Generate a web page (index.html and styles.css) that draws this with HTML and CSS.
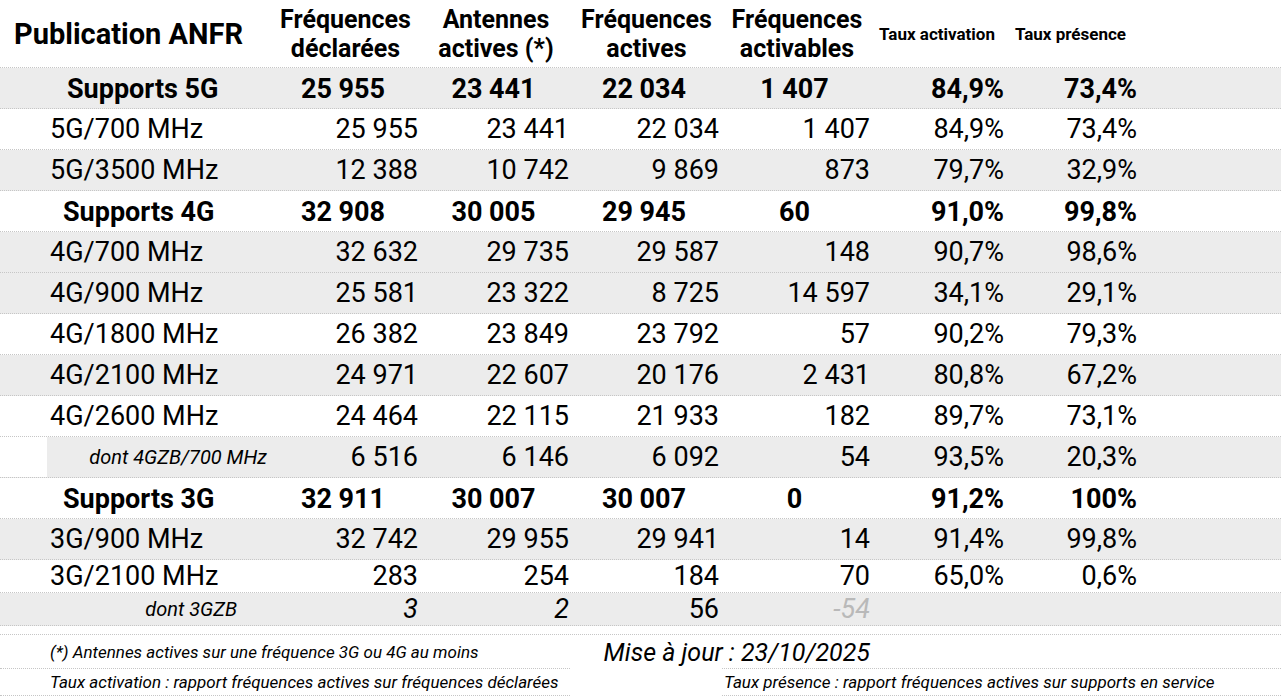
FILE: index.html
```html
<!DOCTYPE html>
<html lang="fr">
<head>
<meta charset="utf-8">
<title>Publication ANFR</title>
<link rel="stylesheet" href="styles.css">
</head>
<body>
<div class="sheet">
  <div class="row head">
    <div class="c title">Publication ANFR</div>
    <div class="c h">Fréquences<br>déclarées</div>
    <div class="c h">Antennes<br>actives (*)</div>
    <div class="c h">Fréquences<br>actives</div>
    <div class="c h">Fréquences<br>activables</div>
    <div class="c hs">Taux activation</div>
    <div class="c hs">Taux présence</div>
  </div>

  <div class="row sum gray">
    <div class="c slabel s5">Supports 5G</div>
    <div class="c sn">25 955</div><div class="c sn">23 441</div><div class="c sn">22 034</div><div class="c sn">1 407</div>
    <div class="c num">84,9%</div><div class="c num">73,4%</div>
  </div>
  <div class="row">
    <div class="c"></div><div class="c label">5G/700 MHz</div>
    <div class="c num">25 955</div><div class="c num">23 441</div><div class="c num">22 034</div><div class="c num">1 407</div>
    <div class="c num">84,9%</div><div class="c num">73,4%</div>
  </div>
  <div class="row gray">
    <div class="c"></div><div class="c label">5G/3500 MHz</div>
    <div class="c num">12 388</div><div class="c num">10 742</div><div class="c num">9 869</div><div class="c num">873</div>
    <div class="c num">79,7%</div><div class="c num">32,9%</div>
  </div>

  <div class="row sum">
    <div class="c slabel">Supports 4G</div>
    <div class="c sn">32 908</div><div class="c sn">30 005</div><div class="c sn">29 945</div><div class="c sn">60</div>
    <div class="c num">91,0%</div><div class="c num">99,8%</div>
  </div>
  <div class="row gray">
    <div class="c"></div><div class="c label">4G/700 MHz</div>
    <div class="c num">32 632</div><div class="c num">29 735</div><div class="c num">29 587</div><div class="c num">148</div>
    <div class="c num">90,7%</div><div class="c num">98,6%</div>
  </div>
  <div class="row gray">
    <div class="c"></div><div class="c label">4G/900 MHz</div>
    <div class="c num">25 581</div><div class="c num">23 322</div><div class="c num">8 725</div><div class="c num">14 597</div>
    <div class="c num">34,1%</div><div class="c num">29,1%</div>
  </div>
  <div class="row">
    <div class="c"></div><div class="c label">4G/1800 MHz</div>
    <div class="c num">26 382</div><div class="c num">23 849</div><div class="c num">23 792</div><div class="c num">57</div>
    <div class="c num">90,2%</div><div class="c num">79,3%</div>
  </div>
  <div class="row gray">
    <div class="c"></div><div class="c label">4G/2100 MHz</div>
    <div class="c num">24 971</div><div class="c num">22 607</div><div class="c num">20 176</div><div class="c num">2 431</div>
    <div class="c num">80,8%</div><div class="c num">67,2%</div>
  </div>
  <div class="row">
    <div class="c"></div><div class="c label">4G/2600 MHz</div>
    <div class="c num">24 464</div><div class="c num">22 115</div><div class="c num">21 933</div><div class="c num">182</div>
    <div class="c num">89,7%</div><div class="c num">73,1%</div>
  </div>
  <div class="row gray">
    <div class="c blank"></div><div class="c dont d4">dont 4GZB/700 MHz</div>
    <div class="c num">6 516</div><div class="c num">6 146</div><div class="c num">6 092</div><div class="c num">54</div>
    <div class="c num">93,5%</div><div class="c num">20,3%</div>
  </div>

  <div class="row sum">
    <div class="c slabel">Supports 3G</div>
    <div class="c sn">32 911</div><div class="c sn">30 007</div><div class="c sn">30 007</div><div class="c sn">0</div>
    <div class="c num">91,2%</div><div class="c num">100%</div>
  </div>
  <div class="row gray">
    <div class="c"></div><div class="c label">3G/900 MHz</div>
    <div class="c num">32 742</div><div class="c num">29 955</div><div class="c num">29 941</div><div class="c num">14</div>
    <div class="c num">91,4%</div><div class="c num">99,8%</div>
  </div>
  <div class="row short">
    <div class="c"></div><div class="c label">3G/2100 MHz</div>
    <div class="c num">283</div><div class="c num">254</div><div class="c num">184</div><div class="c num">70</div>
    <div class="c num">65,0%</div><div class="c num">0,6%</div>
  </div>
  <div class="row short gray">
    <div class="c"></div><div class="c dont d3">dont 3GZB</div>
    <div class="c num it">3</div><div class="c num it">2</div><div class="c num">56</div><div class="c num it neg">-54</div>
    <div class="c"></div><div class="c"></div>
  </div>
  <div class="gap"></div>

  <div class="foot">
    <div class="f note1">(*) Antennes actives sur une fréquence 3G ou 4G au moins</div>
    <div class="f maj">Mise à jour : 23/10/2025</div>
    <div class="f note2">Taux activation : rapport fréquences actives sur fréquences déclarées</div>
    <div class="f note3">Taux présence : rapport fréquences actives sur supports en service</div>
  </div>
</div>
</body>
</html>
```

FILE: styles.css
```css
* { box-sizing: border-box; margin: 0; padding: 0; }

body {
  margin: 0;
  background: #ffffff;
  color: #000000;
  font-family: Roboto, "Liberation Sans", sans-serif;
}

.sheet {
  width: 1281px;
  height: 698px;
  overflow: hidden;
}

.row {
  display: grid;
  grid-template-columns: 47px 221px 150px 151px 150px 151px 134px 133px 1fr;
  height: 41px;
  align-items: stretch;
  border-bottom: 1px dotted #c6c6c6;
  font-size: 27px;
  line-height: 1;
}

.row.gray { background: #ececec; }
.row.short { height: 33px; }

.c {
  display: flex;
  align-items: center;
  white-space: nowrap;
}

.head { height: 68px; }

.title {
  grid-column: 1 / 3;
  padding-left: 14px;
  padding-top: 2px;
  font-weight: 700;
  font-size: 29px;
}

.h {
  justify-content: center;
  text-align: center;
  font-weight: 700;
  font-size: 25px;
  line-height: 29px;
  padding-top: 1px;
  padding-left: 5px;
}

.hs {
  justify-content: center;
  font-weight: 700;
  font-size: 17px;
  padding-top: 1px;
}

.label { padding-left: 3px; }

.num { justify-content: flex-end; }

.sum { font-weight: 700; }
.sum .c { padding-top: 2px; }

.slabel {
  grid-column: 1 / 3;
  padding-left: 63px;
}
.slabel.s5 { padding-left: 67px; }

.sn { justify-content: center; }

.blank { background: #ffffff; }

.dont {
  font-style: italic;
  font-size: 20px;
  justify-content: flex-end;
}
.d4 { padding-right: 1px; }
.d3 { padding-right: 31px; }

.it { font-style: italic; }
.neg { color: #b9b9b9; }

.gap {
  height: 9px;
  border-bottom: 1px dotted #c6c6c6;
}

.foot {
  display: grid;
  grid-template-columns: 570px 152px 148px 1fr;
  grid-template-rows: 33px 28px;
  font-style: italic;
}

.f {
  display: flex;
  align-items: center;
  white-space: nowrap;
}

.note1 {
  grid-column: 1;
  grid-row: 1;
  padding-left: 50px;
  font-size: 17px;
}

.maj {
  grid-column: 2 / 4;
  grid-row: 1;
  justify-content: flex-end;
  font-size: 25px;
  padding-top: 1px;
}

.note2 {
  grid-column: 1;
  grid-row: 2;
  padding-left: 50px;
  font-size: 17px;
  border-top: 1px dotted #c6c6c6;
  border-bottom: 1px dotted #c6c6c6;
}

.note3 {
  grid-column: 3 / 5;
  grid-row: 2;
  padding-left: 2px;
  font-size: 17px;
  border-top: 1px dotted #c6c6c6;
  border-bottom: 1px dotted #c6c6c6;
}
```
